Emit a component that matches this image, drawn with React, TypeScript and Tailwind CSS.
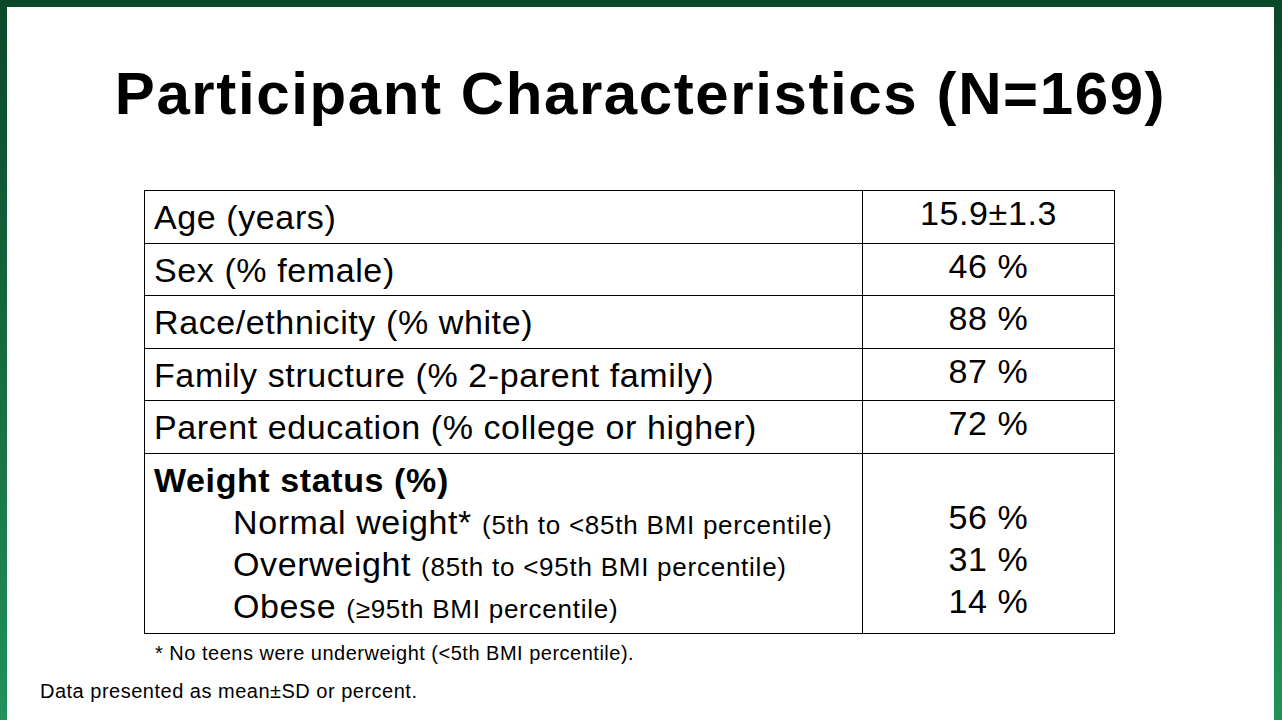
const rows = [
  { label: 'Age (years)', value: '15.9±1.3' },
  { label: 'Sex (% female)', value: '46 %' },
  { label: 'Race/ethnicity (% white)', value: '88 %' },
  { label: 'Family structure (% 2-parent family)', value: '87 %' },
  { label: 'Parent education (% college or higher)', value: '72 %' },
];

const weightRows = [
  { label: 'Normal weight*', note: '(5th to <85th BMI percentile)', value: '56 %' },
  { label: 'Overweight', note: '(85th to <95th BMI percentile)', value: '31 %' },
  { label: 'Obese', note: '(≥95th BMI percentile)', value: '14 %' },
];

export default function App() {
  return (
    <div
      className="w-[1282px] h-[720px] overflow-hidden bg-gradient-to-b from-[#0b4829] to-[#22915a] pt-[7px] pl-[7px] pr-[8px]"
      style={{ fontFamily: '"Liberation Sans", Arial, sans-serif' }}
    >
      <div className="h-full bg-white text-black flex flex-col">
        <h1 className="mt-[47px] text-center text-[60px] font-bold leading-[80px] tracking-[1.6px]">
          Participant Characteristics (N=169)
        </h1>

        <div className="mt-[56px] ml-[137px] w-[971px] border border-black text-[34px] leading-[40px] tracking-[0.6px]">
          {rows.map((row) => (
            <div key={row.label} className="flex h-[52.5px] border-b border-black">
              <div className="w-[717px] pl-[9px] pt-[6px] whitespace-nowrap">{row.label}</div>
              <div className="flex-1 border-l border-black pt-[2px] text-center">{row.value}</div>
            </div>
          ))}
          <div className="flex h-[179px]">
            <div className="w-[717px] pl-[9px] pt-[5px] leading-[42px]">
              <div className="h-[42px] font-bold whitespace-nowrap">Weight status (%)</div>
              {weightRows.map((w) => (
                <div key={w.label} className="h-[42px] pl-[79px] whitespace-nowrap">
                  {w.label}{' '}
                  <span className="text-[26px] leading-none tracking-[0.75px]">{w.note}</span>
                </div>
              ))}
            </div>
            <div className="flex-1 border-l border-black pt-[42px] leading-[42px] text-center">
              {weightRows.map((w) => (
                <div key={w.label} className="h-[42px]">
                  {w.value}
                </div>
              ))}
            </div>
          </div>
        </div>

        <p className="mt-[5px] ml-[148px] text-[20px] leading-[28px] tracking-[0.5px]">
          * No teens were underweight (&lt;5th BMI percentile).
        </p>
        <p className="mt-[10px] ml-[33px] text-[20px] leading-[28px] tracking-[0.5px]">
          Data presented as mean±SD or percent.
        </p>
      </div>
    </div>
  );
}
